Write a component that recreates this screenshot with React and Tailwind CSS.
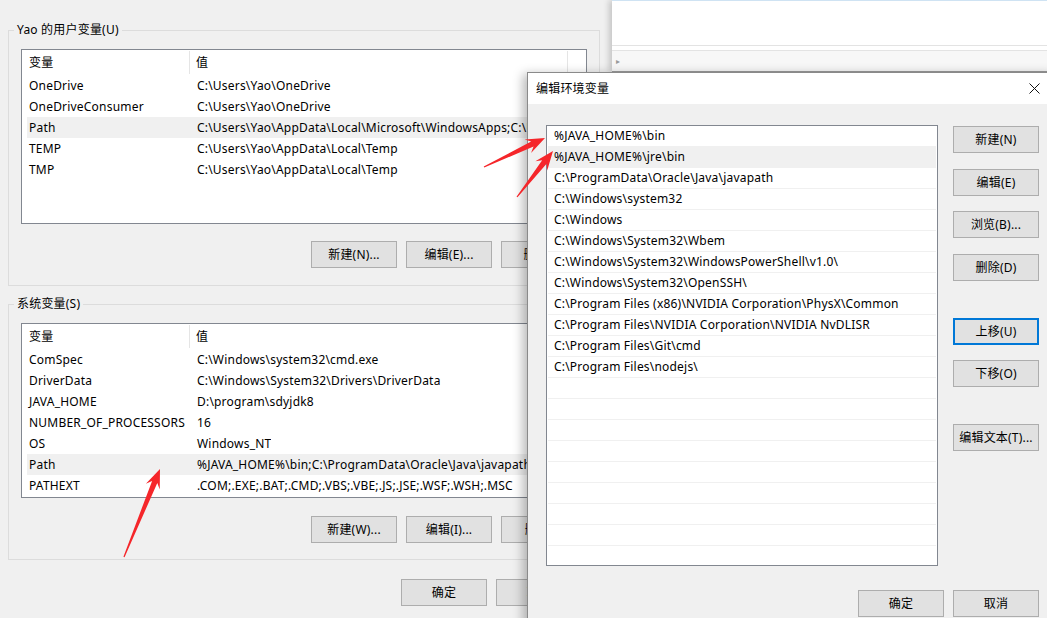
import React from 'react';

const userVars = [
  ['OneDrive', 'C:\\Users\\Yao\\OneDrive'],
  ['OneDriveConsumer', 'C:\\Users\\Yao\\OneDrive'],
  ['Path', 'C:\\Users\\Yao\\AppData\\Local\\Microsoft\\WindowsApps;C:\\Users\\Yao\\AppData\\Roaming\\npm'],
  ['TEMP', 'C:\\Users\\Yao\\AppData\\Local\\Temp'],
  ['TMP', 'C:\\Users\\Yao\\AppData\\Local\\Temp'],
];

const sysVars = [
  ['ComSpec', 'C:\\Windows\\system32\\cmd.exe'],
  ['DriverData', 'C:\\Windows\\System32\\Drivers\\DriverData'],
  ['JAVA_HOME', 'D:\\program\\sdyjdk8'],
  ['NUMBER_OF_PROCESSORS', '16'],
  ['OS', 'Windows_NT'],
  ['Path', '%JAVA_HOME%\\bin;C:\\ProgramData\\Oracle\\Java\\javapath;C:\\Windows\\system32'],
  ['PATHEXT', '.COM;.EXE;.BAT;.CMD;.VBS;.VBE;.JS;.JSE;.WSF;.WSH;.MSC'],
];

const paths = [
  '%JAVA_HOME%\\bin',
  '%JAVA_HOME%\\jre\\bin',
  'C:\\ProgramData\\Oracle\\Java\\javapath',
  'C:\\Windows\\system32',
  'C:\\Windows',
  'C:\\Windows\\System32\\Wbem',
  'C:\\Windows\\System32\\WindowsPowerShell\\v1.0\\',
  'C:\\Windows\\System32\\OpenSSH\\',
  'C:\\Program Files (x86)\\NVIDIA Corporation\\PhysX\\Common',
  'C:\\Program Files\\NVIDIA Corporation\\NVIDIA NvDLISR',
  'C:\\Program Files\\Git\\cmd',
  'C:\\Program Files\\nodejs\\',
];

// red pointer arrows drawn over the screenshot
const arrows = [
  { from: [484, 167], to: [545, 138] },
  { from: [517, 197], to: [553, 151] },
  { from: [124, 557], to: [160, 469] },
];

function arrowPoints({ from, to }) {
  const [x1, y1] = from;
  const [x2, y2] = to;
  const len = Math.hypot(x2 - x1, y2 - y1);
  const ux = (x2 - x1) / len;
  const uy = (y2 - y1) / len;
  const nx = -uy;
  const ny = ux;
  const at = (d, w) => [x2 - ux * d + nx * w, y2 - uy * d + ny * w];
  const pts = [
    [x1 + nx * 0.6, y1 + ny * 0.6],
    at(14, 2.8),
    at(19, 7.5),
    [x2, y2],
    at(19, -7.5),
    at(14, -2.8),
    [x1 - nx * 0.6, y1 - ny * 0.6],
  ];
  return pts.map((p) => p.join(',')).join(' ');
}

function Btn({ children, focused }) {
  return (
    <button
      className={
        focused
          ? 'w-[86px] h-[27px] shrink-0 border-2 border-[#0078d7] bg-[#e1e1e1] text-[12px] leading-none'
          : 'w-[86px] h-[27px] shrink-0 border border-[#adadad] bg-[#e1e1e1] text-[12px] leading-none'
      }
    >
      {children}
    </button>
  );
}

function VarList({ rows, selected }) {
  return (
    <div className="w-[566px] h-[175px] border border-[#828790] bg-white overflow-hidden">
      <div className="flex h-[25px]">
        <div className="w-[168px] shrink-0 pl-[7px] my-[1px] flex items-center border-r border-[#e5e5e5]">变量</div>
        <div className="w-[378px] shrink-0 pl-[6px] my-[1px] flex items-center border-r border-[#e5e5e5]">值</div>
      </div>
      <div className="pl-[5px] pr-[1px]">
        {rows.map(([name, value]) => (
          <div
            key={name}
            className={
              name === selected
                ? 'flex h-[21px] items-center whitespace-nowrap bg-[#f0f0f0]'
                : 'flex h-[21px] items-center whitespace-nowrap'
            }
          >
            <div className="w-[163px] pl-[2px] shrink-0">{name}</div>
            <div className="pl-[7px] min-w-0 overflow-hidden">{value}</div>
          </div>
        ))}
      </div>
    </div>
  );
}

function GroupBox({ title, className, children }) {
  return (
    <fieldset className={`min-w-0 w-[592px] border border-[#dcdcdc] px-[12px] ${className}`}>
      <legend className="-ml-[7px] px-[3px] h-[16px] leading-[16px]">{title}</legend>
      {children}
    </fieldset>
  );
}

export default function App() {
  const rowCount = 21;
  return (
    <div className="relative w-[1047px] h-[618px] overflow-hidden bg-[#f0f0f0] text-[12px] tracking-[0.2px] text-black font-['Noto_Sans','Noto_Sans_CJK_SC',sans-serif]">
      {/* environment variables window */}
      <div className="w-[612px] h-full pl-[8px] pr-[12px]">
        <GroupBox title="Yao 的用户变量(U)" className="mt-[22px] pb-[17px]">
          <div className="mt-[11px]">
            <VarList rows={userVars} selected="Path" />
          </div>
          <div className="flex justify-end gap-[9px] mt-[17px]">
            <Btn>新建(N)...</Btn>
            <Btn>编辑(E)...</Btn>
            <Btn>删除(D)</Btn>
          </div>
        </GroupBox>

        <GroupBox title="系统变量(S)" className="mt-[10px] pb-[16px]">
          <div className="mt-[11px]">
            <VarList rows={sysVars} selected="Path" />
          </div>
          <div className="flex justify-end gap-[9px] mt-[18px]">
            <Btn>新建(W)...</Btn>
            <Btn>编辑(I)...</Btn>
            <Btn>删除(L)</Btn>
          </div>
        </GroupBox>

        <div className="flex justify-end gap-[9px] mt-[19px] pr-[18px]">
          <Btn>确定</Btn>
          <Btn>取消</Btn>
        </div>
      </div>

      {/* window behind, top right */}
      <div className="absolute left-[612px] top-0 w-[435px] h-[72px] bg-white border-b border-[#9a9a9a] shadow-[-3px_0_6px_rgba(0,0,0,0.18)] flex flex-col">
        <div className="h-[1px] bg-[#cfe3f3]" />
        <div className="h-[45px] border-b border-[#e3e3e3]" />
        <div className="h-[5px] border-b border-[#e3e3e3]" />
        <div className="flex-1 bg-[#f7f7f7] flex items-center pl-[4px] text-[8px] text-[#9a9a9a]">▸</div>
      </div>

      {/* edit environment variable dialog */}
      <div className="absolute left-[527px] top-[72px] w-[530px] h-[560px] border border-[#8a8a8a] bg-[#f0f0f0] shadow-[-4px_2px_10px_rgba(0,0,0,0.28)]">
        <div className="h-[31px] bg-white flex items-center justify-between pl-[8px] pr-[13px]">
          <span>编辑环境变量</span>
          <svg width="11" height="11" viewBox="0 0 11 11" className="mr-[3px]">
            <path d="M0.5 0.5 L10.5 10.5 M10.5 0.5 L0.5 10.5" stroke="#111" strokeWidth="1" />
          </svg>
        </div>
        <div className="pl-[18px] pt-[21px]">
          <div className="flex">
            <div className="w-[392px] h-[441px] border border-[#828790] bg-white overflow-hidden">
              {Array.from({ length: rowCount }).map((_, i) => (
                <div
                  key={i}
                  className={
                    i === 1
                      ? 'mx-[1px] h-[21px] border-b border-[#f0f0f0] bg-[#f0f0f0] pl-[6px] flex items-center whitespace-nowrap'
                      : 'mx-[1px] h-[21px] border-b border-[#f0f0f0] pl-[6px] flex items-center whitespace-nowrap'
                  }
                >
                  {paths[i] || ''}
                </div>
              ))}
            </div>
            <div className="ml-[15px] flex flex-col">
              <div className="mt-[1px]"><Btn>新建(N)</Btn></div>
              <div className="mt-[16px]"><Btn>编辑(E)</Btn></div>
              <div className="mt-[15px]"><Btn>浏览(B)...</Btn></div>
              <div className="mt-[16px]"><Btn>删除(D)</Btn></div>
              <div className="mt-[37px]"><Btn focused>上移(U)</Btn></div>
              <div className="mt-[15px]"><Btn>下移(O)</Btn></div>
              <div className="mt-[37px]"><Btn>编辑文本(T)...</Btn></div>
            </div>
          </div>
          <div className="w-[493px] flex justify-end gap-[9px] mt-[24px]">
            <Btn>确定</Btn>
            <Btn>取消</Btn>
          </div>
        </div>
      </div>

      <svg className="absolute inset-0 pointer-events-none" width="1047" height="618">
        {arrows.map((a, i) => (
          <polygon key={i} points={arrowPoints(a)} fill="#f5262a" />
        ))}
      </svg>
    </div>
  );
}
